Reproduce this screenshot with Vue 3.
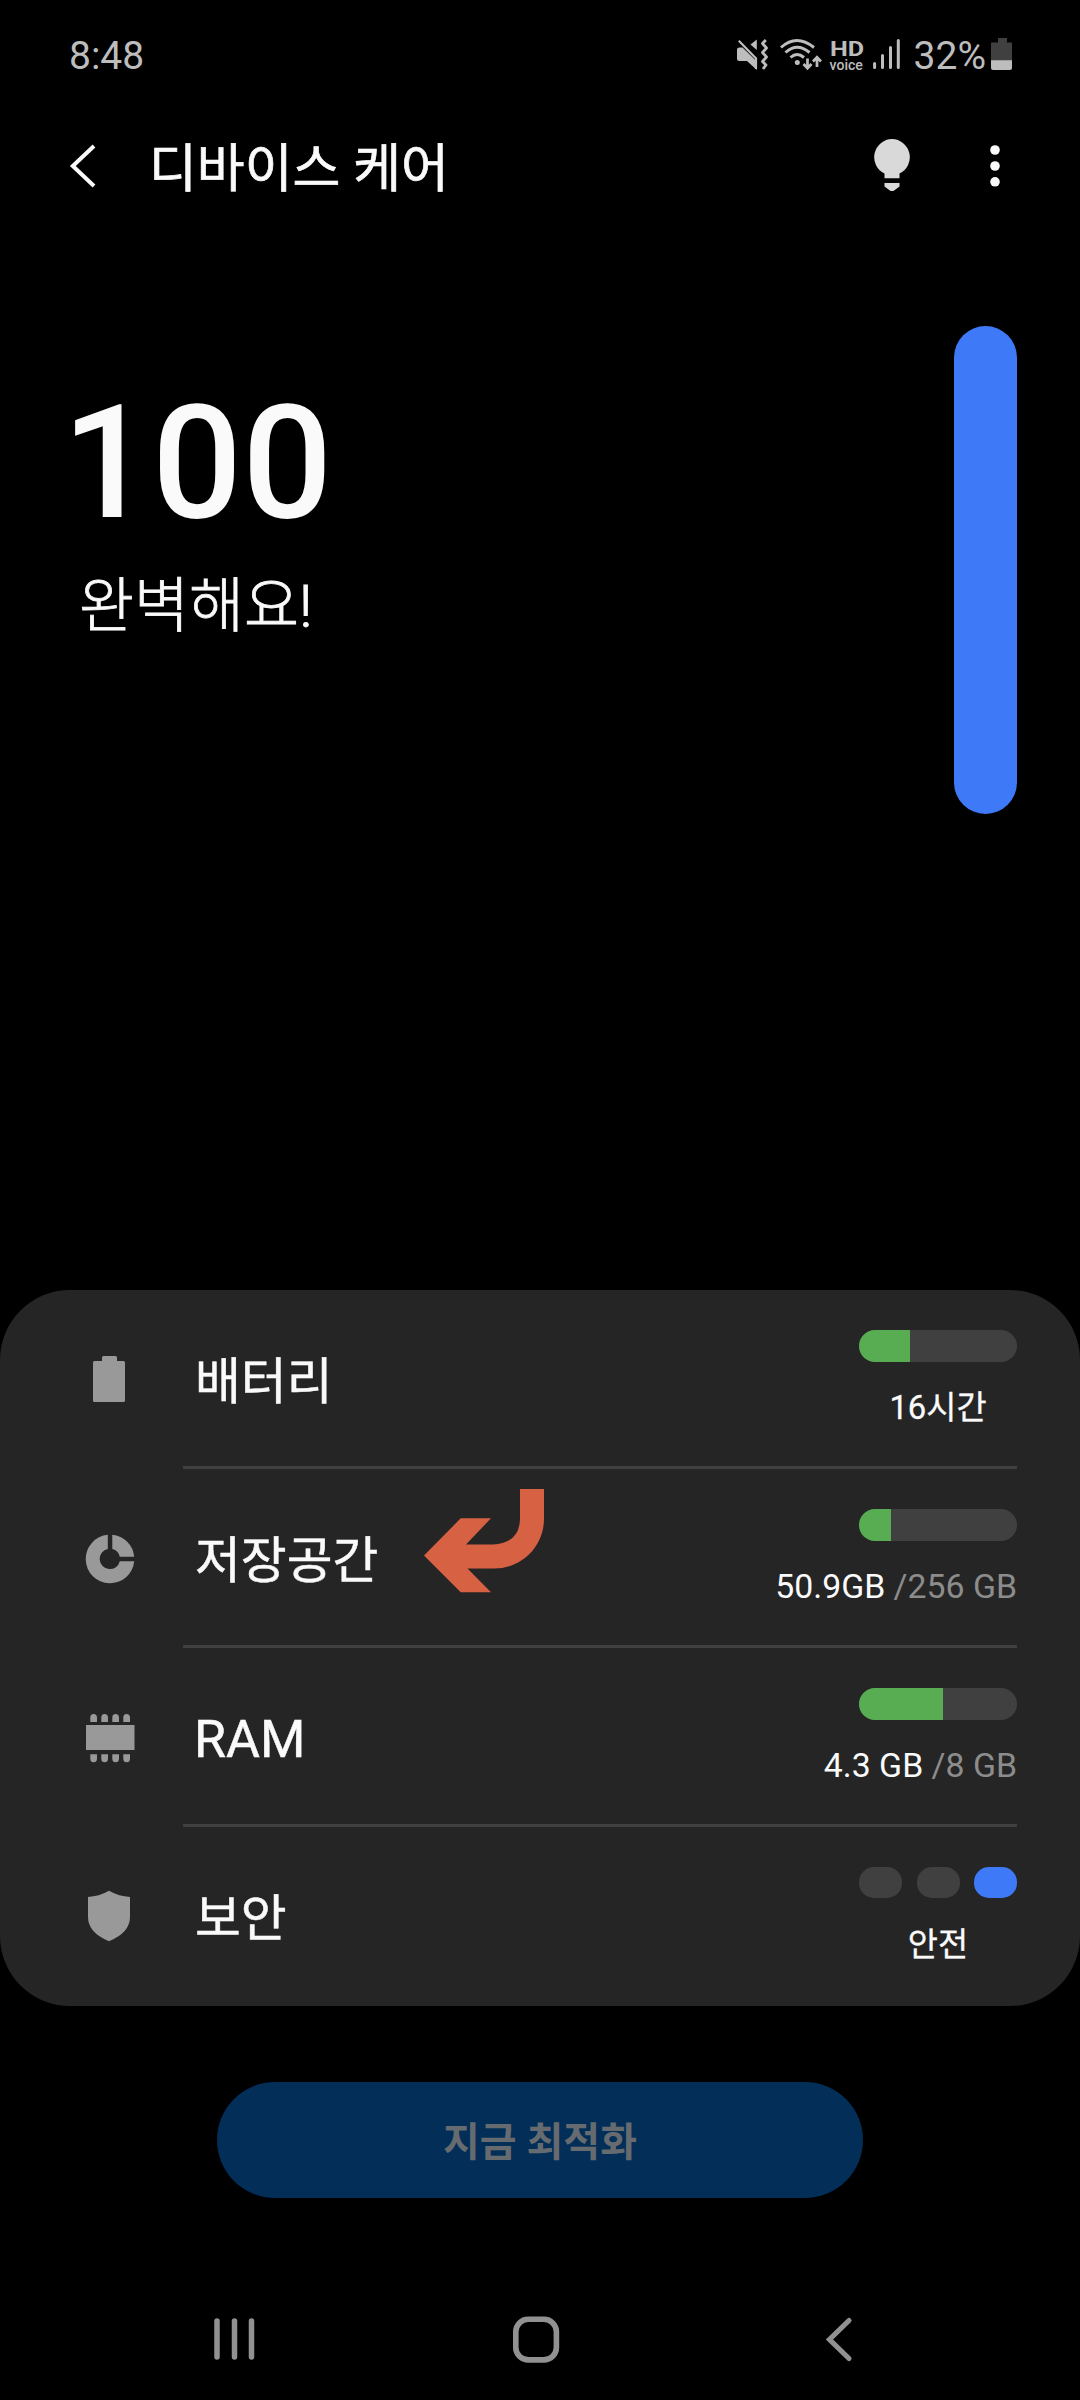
<script setup>
const rows = [
  { id: 'battery', label: '배터리', fill: 51, used: '16시간', centered: true },
  { id: 'storage', label: '저장공간', fill: 32, used: '50.9GB', total: ' /256 GB' },
  { id: 'ram', label: 'RAM', fill: 84, used: '4.3 GB', total: ' /8 GB' },
  { id: 'security', label: '보안', used: '안전', centered: true },
]
</script>

<template>
  <div class="screen">
    <header class="status">
      <span class="clock">8:48</span>
      <div class="status-right">
        <svg class="ic-mute" width="34" height="34" viewBox="0 0 34 34" fill="#bdbdbd">
          <path d="M1.5 10.5h5L20.8 24.500V33L11 24H3.500Q1 24 1 21.500V12.500Q1 10.500 3.500 10.500Z" />
          <path d="M2.800 3.800L20 21.500V32" fill="none" stroke="#bdbdbd" stroke-width="2.200" />
          <path d="M20.800 2.500V13L14.500 7.600Z" />
          <path d="M29.800 3L26.500 6.500L30.500 11L26.500 15.500L30.500 20L26.500 24.500L30 28L27 32" fill="none" stroke="#bdbdbd" stroke-width="2.800" stroke-linejoin="round" />
        </svg>
        <svg class="ic-wifi" width="44" height="34" viewBox="0 0 44 34" fill="none" stroke="#bdbdbd" stroke-width="3">
          <path d="M2 10.500Q17.500-3.500 35 10.500" />
          <path d="M6.500 15.500Q18 5 30.500 15.500" />
          <path d="M11.500 20.500Q18 14.500 25 20.500" />
          <circle cx="18.300" cy="25.500" r="2.500" fill="#bdbdbd" stroke="none" />
          <path d="M28.500 21.500V30.500M24.500 27L28.500 31.200L32.500 27M38 30V21M34 24.500L38 20.200L42 24.500" stroke-width="2.700" />
        </svg>
        <div class="ic-hd"><b>HD</b><small>voice</small></div>
        <svg class="ic-signal" width="28" height="34" viewBox="0 0 28 34" stroke="#bdbdbd" stroke-width="3" stroke-linecap="round">
          <path d="M1.600 26.500V30.500M9.500 18.500V30.500M17.500 10.500V30.500M25.300 3.500V30.500" />
        </svg>
        <span class="pct">32%</span>
        <svg class="ic-batt" width="22" height="34" viewBox="0 0 22 34">
          <path d="M7 1H16V5.500H21V24H0V5.500H7Z" fill="#404040" />
          <path d="M0 23.200H21V31Q21 33 19 33H2Q0 33 0 31Z" fill="#bdbdbd" />
        </svg>
      </div>
    </header>

    <nav class="bar">
      <svg class="back" width="28" height="44" viewBox="0 0 28 44" fill="none" stroke="#fafafa" stroke-width="4">
        <path d="M25 2L3.800 22L25 42" />
      </svg>
      <h1>디바이스 케어</h1>
      <svg class="bulb" width="38" height="54" viewBox="0 0 38 54" fill="#d9d9d9">
        <path d="M19 1A18.200 18.200 0 0 1 26.500 35.600V40.300H11.500V35.600A18.200 18.200 0 0 1 19 1Z" />
        <path d="M11.500 45H26.500V48.500L21.500 52.200Q19 54 16.500 52.200L11.500 48.500Z" />
      </svg>
      <svg class="more" width="10" height="42" viewBox="0 0 10 42" fill="#fafafa">
        <circle cx="5" cy="5" r="4.800" /><circle cx="5" cy="21" r="4.800" /><circle cx="5" cy="36.800" r="4.800" />
      </svg>
    </nav>

    <section class="score">
      <div class="score-text">
        <div class="num">100</div>
        <div class="msg">완벽해요!</div>
      </div>
      <div class="gauge"></div>
    </section>

    <section class="card">
      <div v-for="r in rows" :key="r.id" class="row">
        <div class="icon">
          <svg width="50" height="52" viewBox="0 0 50 52" fill="#999">
            <path v-if="r.id === 'battery'" d="M18.500 3H30.500Q32 3 32 4.500V8H38.500Q40 8 40 9.500V47.500Q40 49 38.500 49H9.500Q8 49 8 47.500V9.500Q8 8 9.500 8H17V4.500Q17 3 18.500 3Z" />
            <g v-else-if="r.id === 'storage'">
              <path d="M22.800 2.800V16.900A10.200 10.200 0 1 0 34.800 29.200H49.200A24.300 24.300 0 1 1 22.800 2.800Z" />
              <path d="M27.300 2.800A24.300 24.300 0 0 1 49.200 24.800H34.800A10.200 10.200 0 0 0 27.300 16.900Z" />
            </g>
            <g v-else-if="r.id === 'ram'" transform="translate(0 1)">
              <rect x="1" y="13" width="48.500" height="25" />
              <path v-for="i in 4" :key="i" :transform="`translate(${(i - 1) * 11} 0)`" d="M5.300 10V5.500Q5.300 2 8.600 2T12 5.500V10ZM5.300 42.300V46.800Q5.300 50.300 8.600 50.300T12 46.800V42.300Z" />
            </g>
            <path v-else d="M24 .8Q34 6.500 45 6.900V27Q45 42.500 24 51.300Q3 42.500 3 27V6.900Q14 6.500 24 .8Z" />
          </svg>
        </div>
        <div class="body">
          <span class="label" :class="{ latin: r.id === 'ram' }">{{ r.label }}</span>
          <div class="info">
            <div v-if="r.fill" class="meter"><div class="fill" :style="{ width: r.fill + 'px' }"></div></div>
            <div v-else class="levels"><i></i><i></i><i class="on"></i></div>
            <div class="sub" :class="{ centered: r.centered }">{{ r.used }}<span v-if="r.total" class="total">{{ r.total }}</span></div>
          </div>
        </div>
      </div>
      <svg class="pointer" width="122" height="106" viewBox="0 0 122 106" fill="#d66243">
        <path d="M0 67.500L36.700 30.300H67L42 56.500H69Q96 55 96 30V1H120V32C119 60 97 80.500 70 80.500H43.500L67 104.300H36.700Z" />
      </svg>
    </section>

    <div class="action"><button class="optimize">지금 최적화</button></div>

    <footer class="nav">
      <svg width="42" height="48" viewBox="0 0 42 48" stroke="#919191" stroke-width="5.500" stroke-linecap="round">
        <path d="M4 5V41M21.500 5V41M38.500 5V41" />
      </svg>
      <svg class="home" width="48" height="48" viewBox="0 0 48 48" fill="none" stroke="#919191" stroke-width="5.600">
        <rect x="3.800" y="3.300" width="40.600" height="40.600" rx="12.500" />
      </svg>
      <svg width="28" height="48" viewBox="0 0 28 48" fill="none" stroke="#919191" stroke-width="5.200" stroke-linecap="round">
        <path d="M24 4.500L4.500 23.500L24 42.500" />
      </svg>
    </footer>
  </div>
</template>

<style>
body { background: #000; }
</style>

<style scoped>
.screen {
  width: 1080px;
  height: 2400px;
  background: #000;
  color: #fafafa;
  font-family: Roboto, "Noto Sans CJK KR", sans-serif;
  overflow: hidden;
  display: flex;
  flex-direction: column;
}
svg { display: block; flex: none; }
.status {
  height: 111px;
  box-sizing: border-box;
  padding: 0 67px 0 69px;
  display: flex;
  align-items: center;
  justify-content: space-between;
  color: #bdbdbd;
  font-size: 39px;
  line-height: 44px;
}
.status-right { display: flex; align-items: center; }
.status-right svg { margin-bottom: 4px; }
.ic-wifi { margin-left: 9px; }
.ic-hd {
  width: 34px;
  height: 33px;
  margin: 0 1px 1px 7px;
  display: flex;
  flex-direction: column;
}
.ic-hd b {
  font-size: 21px;
  line-height: 20px;
  font-weight: 700;
  transform: scaleX(1.2);
  transform-origin: 0 0;
}
.ic-hd small {
  font-size: 14px;
  line-height: 13px;
  font-weight: 500;
}
.ic-signal { margin-left: 8px; }
.pct { margin-left: 13px; }
.ic-batt { margin-left: 5px; }
.bar {
  height: 116px;
  box-sizing: border-box;
  padding: 0 80px 0 69px;
  display: flex;
  align-items: center;
}
.back { margin-bottom: 7px; }
h1 {
  margin: 2px auto 0 52px;
  font-size: 52px;
  line-height: 60px;
  font-weight: 400;
  -webkit-text-stroke: 0.7px currentColor;
  white-space: nowrap;
}
.bulb { margin: 0 79px 8px 0; }
.more { margin-bottom: 7px; }
.score {
  height: 1063px;
  box-sizing: border-box;
  padding: 99px 63px 0 62px;
  display: flex;
  justify-content: space-between;
}
.score-text { padding-top: 57px; }
.num { font-size: 158.500px; line-height: 160px; font-weight: 500; }
.msg {
  margin: 24px 0 0 17px;
  font-size: 59.800px;
  line-height: 80px;
  font-weight: 300;
  -webkit-text-stroke: 0.8px currentColor;
}
.gauge { width: 63px; height: 488px; border-radius: 32px; background: #3e79f7; }
.card {
  position: relative;
  height: 716px;
  background: #252525;
  border-radius: 70px;
}
.row { height: 179px; display: flex; }
.icon { width: 183px; box-sizing: border-box; padding: 63px 0 0 85px; }
.body {
  width: 834px;
  box-sizing: border-box;
  border-bottom: 3px solid #404040;
  display: flex;
  justify-content: space-between;
}
.row:nth-child(4) .body { border-bottom: none; }
.label {
  padding: 62px 0 0 12px;
  font-size: 49.800px;
  line-height: 60px;
  -webkit-text-stroke: 0.5px currentColor;
}
.label.latin { padding: 62px 0 0 11px; font-size: 52px; }
.info { padding-top: 40px; display: flex; flex-direction: column; align-items: flex-end; }
.meter { width: 158px; height: 32px; border-radius: 16px; background: #404040; overflow: hidden; }
.fill { height: 100%; background: #58ad52; }
.levels { width: 158px; height: 32px; display: flex; justify-content: space-between; }
.levels i { width: 43px; height: 31px; border-radius: 15px; background: #404040; }
.levels .on { background: #3e79f7; }
.sub { margin-top: 26px; font-size: 33.800px; line-height: 40px; white-space: pre; }
.centered {
  width: 158px;
  text-align: center;
  font-size: 32.800px;
  -webkit-text-stroke: 0.3px currentColor;
}
.total { color: #8c8c8c; }
.pointer { position: absolute; left: 424px; top: 198px; }
.action { padding-top: 76px; display: flex; justify-content: center; }
.optimize {
  width: 646px;
  height: 116px;
  padding: 6px 0 0;
  border: 0;
  border-radius: 58px;
  background: #022e58;
  color: #666b70;
  font: 700 40px/60px Roboto, "Noto Sans CJK KR", sans-serif;
}
.nav {
  margin-top: 118px;
  padding: 0 227px 0 213px;
  display: flex;
  justify-content: space-between;
}
.home { margin-right: 9px; }
</style>
